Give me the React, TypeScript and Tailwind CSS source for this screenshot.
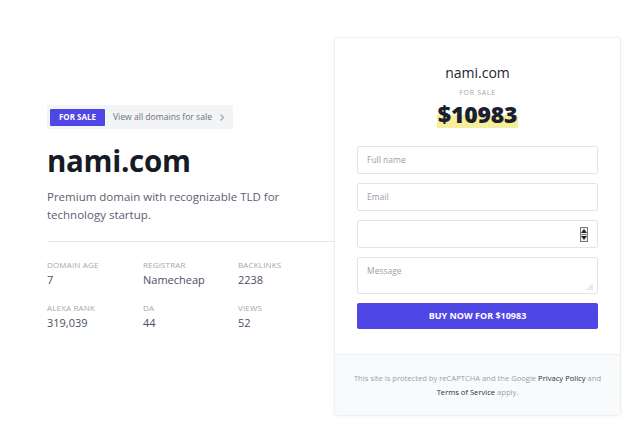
import React from "react";

const font = { fontFamily: '"Open Sans", "Noto Sans", sans-serif' };

function Stat({ label, value }: { label: string; value: string }) {
  return (
    <div className="flex flex-col">
      <span className="text-[8px] uppercase tracking-[0.02em] text-[#a3a6ae] leading-[12px]">{label}</span>
      <span className="text-[11px] text-[#4b5060] leading-[16px] mt-[1px]">{value}</span>
    </div>
  );
}

export default function App() {
  return (
    <div className="w-[642px] h-[429px] bg-white relative" style={font}>
      <div className="flex pt-[37px] pl-[47px]">
        <div className="w-[287px] pt-[68px]">
          <div className="flex items-center w-[186px] h-[24px] bg-[#f3f4f6] rounded-[2px] pl-[3px]">
            <span className="bg-[#4f46e5] text-white text-[8px] font-bold h-[17px] w-[55px] flex items-center justify-center rounded-[1px]">FOR SALE</span>
            <span className="text-[8.6px] text-[#6b7080] ml-[8px]">View all domains for sale</span>
            <svg className="ml-[7px]" width="6" height="9" viewBox="0 0 6 9" fill="none">
              <path d="M1.5 1.5L4.5 4.5L1.5 7.5" stroke="#9ca0aa" strokeWidth="1.1" />
            </svg>
          </div>
          <h1 className="text-[29.5px] font-bold text-[#161b26] leading-[40px] mt-[12px] tracking-[-0.01em]">nami.com</h1>
          <p className="text-[11.5px] text-[#5b6070] leading-[18px] mt-[7px] w-[250px]">
            Premium domain with recognizable TLD for technology startup.
          </p>
          <div className="h-px bg-[#e7e8eb] mt-[17px] w-[287px]" />
          <div className="grid grid-cols-[96px_95px_80px] gap-y-[14px] mt-[17px]">
            <Stat label="Domain Age" value="7" />
            <Stat label="Registrar" value="Namecheap" />
            <Stat label="Backlinks" value="2238" />
            <Stat label="Alexa Rank" value="319,039" />
            <Stat label="DA" value="44" />
            <Stat label="Views" value="52" />
          </div>
        </div>
        <div className="w-[287px] h-[379px] border border-[#eeeff1] rounded-[3px] shadow-[0_1px_4px_rgba(0,0,0,0.04)] flex flex-col overflow-hidden">
          <div className="flex-1 px-[22px] pt-[25px]">
            <div className="text-center text-[14px] text-[#1f2430] leading-[20px]">nami.com</div>
            <div className="text-center text-[7px] tracking-[0.1em] text-[#a3a6ae] mt-[5px] leading-[10px]">FOR SALE</div>
            <div className="flex justify-center mt-[2px]">
              <span className="text-[23px] font-extrabold text-[#1a2030] leading-[28px] tracking-[-0.01em] bg-[linear-gradient(to_bottom,transparent_55%,#f6ee9a_55%)] px-[1px]">$10983</span>
            </div>
            <div className="flex flex-col gap-[9px] mt-[18px]">
              <div className="h-[28px] border border-[#e3e4e7] rounded-[2px] flex items-center px-[9px] text-[8.5px] text-[#9a9ea8]">Full name</div>
              <div className="h-[28px] border border-[#e3e4e7] rounded-[2px] flex items-center px-[9px] text-[8.5px] text-[#9a9ea8]">Email</div>
              <div className="h-[28px] border border-[#e3e4e7] rounded-[2px] flex items-center justify-end px-[9px]">
                <div className="flex flex-col w-[8px] h-[15px] border border-[#777] bg-[#eee]">
                  <div className="flex-1 flex items-center justify-center border-b border-[#888]">
                    <svg width="6" height="4" viewBox="0 0 6 4"><path d="M0 4L3 0L6 4Z" fill="#222" /></svg>
                  </div>
                  <div className="flex-1 flex items-center justify-center">
                    <svg width="6" height="4" viewBox="0 0 6 4"><path d="M0 0L3 4L6 0Z" fill="#222" /></svg>
                  </div>
                </div>
              </div>
              <div className="h-[37px] border border-[#e3e4e7] rounded-[2px] px-[9px] pt-[7px] text-[8.5px] text-[#9a9ea8] relative">
                Message
                <svg className="absolute right-[4px] bottom-[3px]" width="7" height="7" viewBox="0 0 7 7">
                  <circle cx="6" cy="2" r="0.6" fill="#999" />
                  <circle cx="4" cy="4" r="0.6" fill="#999" />
                  <circle cx="6" cy="4" r="0.6" fill="#999" />
                  <circle cx="2" cy="6" r="0.6" fill="#999" />
                  <circle cx="4" cy="6" r="0.6" fill="#999" />
                  <circle cx="6" cy="6" r="0.6" fill="#999" />
                </svg>
              </div>
              <div className="h-[26px] bg-[#4f46e5] rounded-[2px] flex items-center justify-center text-white text-[9px] font-bold">BUY NOW FOR $10983</div>
            </div>
          </div>
          <div className="h-[61px] bg-[#f9fafb] border-t border-[#f0f1f3] flex flex-col items-center justify-center px-[10px] text-[7.6px] leading-[14px] text-[#9a9ea8]">
            <p className="text-center whitespace-nowrap">
              This site is protected by reCAPTCHA and the Google <span className="text-[#2a2f3a]">Privacy Policy</span> and
            </p>
            <p className="text-center">
              <span className="text-[#2a2f3a]">Terms of Service</span> apply.
            </p>
          </div>
        </div>
      </div>
    </div>
  );
}
